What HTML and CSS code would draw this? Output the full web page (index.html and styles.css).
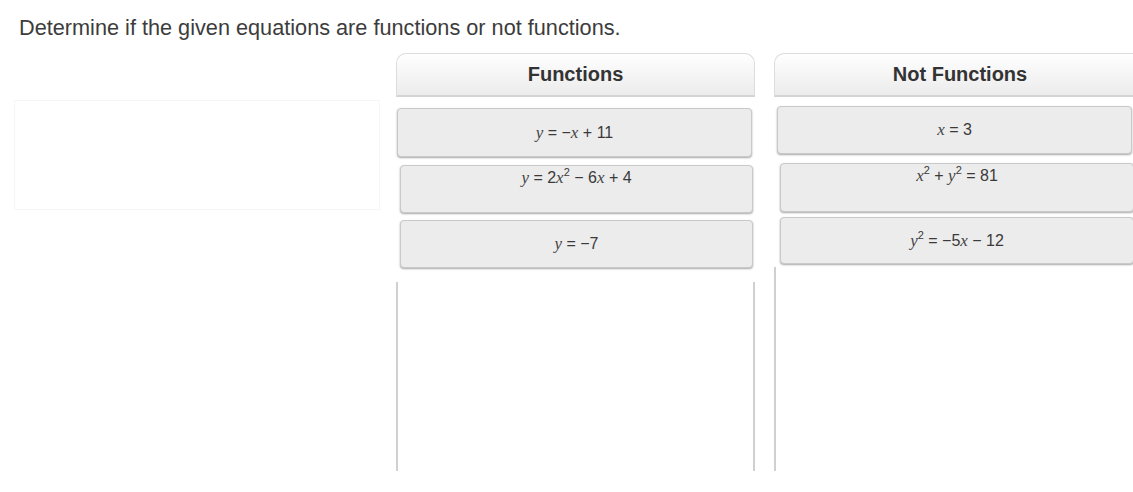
FILE: index.html
```html
<!DOCTYPE html>
<html>
<head>
<meta charset="utf-8">
<link rel="stylesheet" href="styles.css">
</head>
<body>
<div class="page">
  <p class="prompt">Determine if the given equations are functions or not functions.</p>
  <div class="board">
    <div class="source"></div>
    <div class="column col-fn">
      <div class="col-head">Functions</div>
      <div class="cards">
        <div class="card fn1"><span class="eq"><i>y</i> = &minus;<i>x</i> + 11</span></div>
        <div class="card fn2 top"><span class="eq"><i>y</i> = 2<i>x</i><sup>2</sup> &minus; 6<i>x</i> + 4</span></div>
        <div class="card fn3"><span class="eq"><i>y</i> = &minus;7</span></div>
      </div>
      <div class="drop drop-fn"></div>
    </div>
    <div class="column col-nf">
      <div class="col-head">Not Functions</div>
      <div class="cards">
        <div class="card nf1"><span class="eq"><i>x</i> = 3</span></div>
        <div class="card nf2 top"><span class="eq"><i>x</i><sup>2</sup> + <i>y</i><sup>2</sup> = 81</span></div>
        <div class="card nf3"><span class="eq"><i>y</i><sup>2</sup> = &minus;5<i>x</i> &minus; 12</span></div>
      </div>
      <div class="drop drop-nf"></div>
    </div>
  </div>
</div>
</body>
</html>
```
FILE: styles.css
```css
html, body {
  margin: 0;
  padding: 0;
  background: #fff;
}
.page {
  width: 1133px;
  height: 492px;
  overflow: hidden;
  padding-top: 17px;
  box-sizing: border-box;
  font-family: "Liberation Sans", Arial, sans-serif;
  color: #333;
}
.prompt {
  margin: 0 0 0 19px;
  font-size: 21.7px;
  line-height: 22px;
  color: #3c3c3c;
  white-space: nowrap;
}
.board {
  display: flex;
  align-items: flex-start;
  margin-top: 14px;
  padding-left: 14px;
}
.source {
  flex: none;
  width: 366px;
  height: 110px;
  margin-top: 47px;
  margin-right: 16px;
  border: 1px solid #f6f6f6;
  box-sizing: border-box;
}
.column {
  display: flex;
  flex-direction: column;
  flex: none;
}
.col-fn {
  width: 359px;
  margin-right: 19px;
}
.col-nf {
  width: 372px;
}
.col-head {
  height: 41px;
  border: 1px solid #dcdcdc;
  border-bottom: 2px solid #d4d4d4;
  border-radius: 10px 10px 0 0;
  background: linear-gradient(#ffffff, #f3f3f3 60%, #ececec);
  font-weight: bold;
  font-size: 20px;
  line-height: 41px;
  text-align: center;
  color: #333;
}
.cards {
  display: flex;
  flex-direction: column;
}
.card {
  height: 47px;
  box-sizing: border-box;
  background: #ececec;
  border: 1px solid #c9c9c9;
  border-radius: 4px;
  box-shadow: 0 1px 2px rgba(0, 0, 0, 0.35);
  display: flex;
  align-items: center;
  justify-content: center;
  font-size: 16px;
  color: #3a3a3a;
}
.card.top {
  align-items: flex-start;
  padding-top: 2px;
}
.eq {
  font-family: "Liberation Sans", Arial, sans-serif;
  white-space: nowrap;
}
.eq i {
  font-family: "Liberation Serif", "DejaVu Serif", serif;
  font-style: italic;
  font-size: 17px;
  color: #444;
}
.eq sup {
  font-size: 11px;
  line-height: 0;
  vertical-align: 7px;
}
.fn1 { margin: 11px 3px 0 1px; height: 49px; }
.fn2 { margin: 8px 2px 0 4px; height: 48px; }
.fn3 { margin: 7px 2px 0 4px; height: 48px; }
.nf1 { margin: 9px 0 0 3px; height: 48px; width: 355px; }
.nf2 { margin: 9px 0 0 6px; height: 49px; width: 354px; }
.nf3 { margin: 5px 0 0 6px; height: 47px; width: 354px; }
.drop {
  border-left: 2px solid #d0d0d0;
  box-sizing: border-box;
}
.drop-fn {
  margin-top: 14px;
  height: 189px;
  border-right: 2px solid #d0d0d0;
}
.drop-nf {
  margin-top: 3px;
  height: 204px;
}
```
